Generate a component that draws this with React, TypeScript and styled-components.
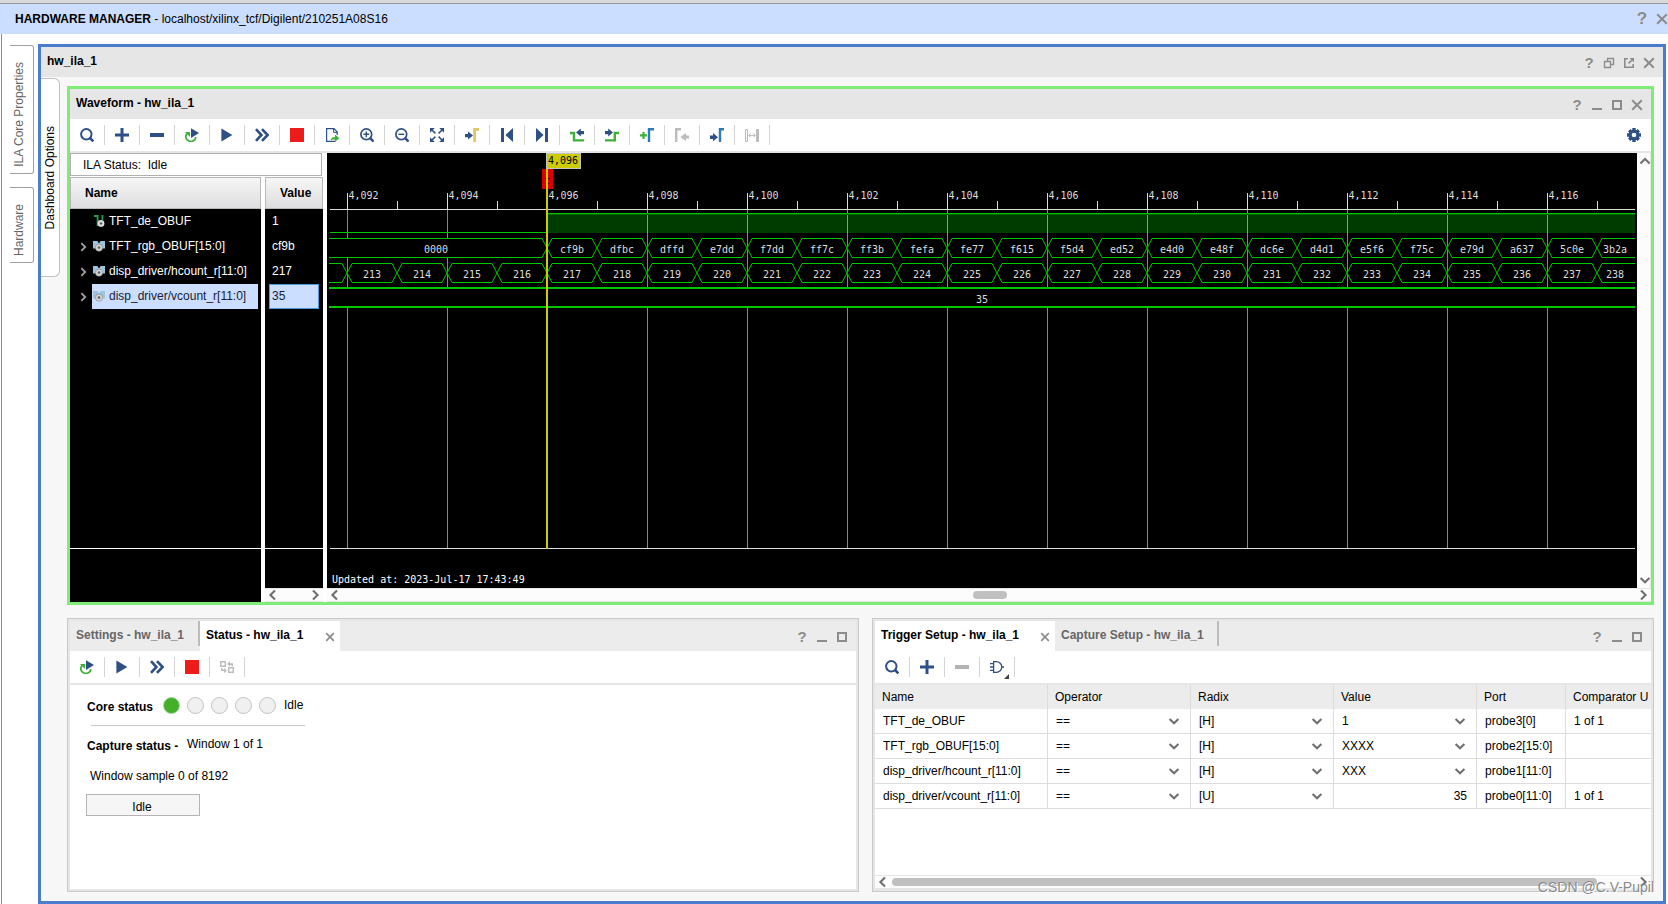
import React from "react";
import styled, { createGlobalStyle } from "styled-components";

const NAVY = "#2f4f87";
const GREEN = "#3fb03a";
const BLUE = "#2b7bb9";
const MUTED = "#bcbcbc";
const TRACE = "#00c800";

const GlobalStyle = createGlobalStyle`
  * { box-sizing: border-box; }
  body {
    margin: 0;
    background: #fff;
    color: #000;
    font: 12px/16px "Liberation Sans", Arial, sans-serif;
  }
  button, input, select { font: inherit; color: inherit; }
  h1, h2, p { margin: 0; font-size: inherit; }
`;

/* ---------- page shell ---------- */

const Page = styled.div`
  min-height: 100vh;
  display: flex;
  flex-direction: column;
  border-top: 3px solid #d9d9d9;
`;

const AppBar = styled.header`
  height: 31px;
  flex: none;
  display: flex;
  align-items: center;
  justify-content: space-between;
  padding: 0 0 0 15px;
  border-top: 1px solid #999;
  background: #cbdeff;
  overflow: hidden;
`;

const AppTitle = styled.h1`
  font-weight: normal;
`;

const AppControls = styled.div`
  display: flex;
  margin-right: -4px;
`;

const Workspace = styled.div`
  flex: 1;
  display: flex;
  margin-left: 1px;
  padding: 10px 2px 0 8px;
  border-left: 1px solid #8c8c8c;
`;

const SideTabs = styled.nav`
  width: 28px;
  flex: none;
  display: flex;
  flex-direction: column;
  gap: 13px;
  padding-top: 1px;
`;

const VerticalTab = styled.button<{ $length: number; $active?: boolean }>`
  width: ${(p) => (p.$active ? 19 : 24)}px;
  height: ${(p) => p.$length}px;
  display: flex;
  align-items: center;
  justify-content: center;
  padding: ${(p) => (p.$active ? "0" : "10px 6px 0 0")};
  border: 1px solid ${(p) => (p.$active ? "#c0c0c0" : "#a0a0a0")};
  border-left: 0;
  border-radius: ${(p) => (p.$active ? "0 6px 6px 0" : "0 3px 3px 0")};
  background: #fff;
  color: ${(p) => (p.$active ? "#000" : "#666")};
`;

const VerticalText = styled.span`
  writing-mode: vertical-rl;
  transform: rotate(180deg);
  white-space: nowrap;
`;

const Dashboard = styled.main`
  flex: 1;
  min-width: 0;
  display: flex;
  flex-direction: column;
  border: 3px solid #4a7dcd;
  background: #f7f7f7;
`;

const DashboardBody = styled.div`
  flex: 1;
  display: flex;
  padding: 1px 9px 9px 0;
`;

const DashboardSide = styled.div`
  width: 26px;
  flex: none;
`;

const Panels = styled.div`
  flex: 1;
  min-width: 0;
  display: flex;
  flex-direction: column;
  gap: 13px;
  padding-top: 8px;
`;

/* ---------- window chrome ---------- */

const TitleBar = styled.div`
  height: 30px;
  display: flex;
  align-items: center;
  justify-content: space-between;
  padding: 0 4px 0 6px;
  background: #e6e6e6;
`;

const PanelTitle = styled.h2`
  padding-bottom: 2px;
`;

const WindowControls = styled.div`
  display: flex;
  padding-top: 2px;
`;

const ControlButton = styled.button`
  width: 20px;
  height: 20px;
  display: flex;
  align-items: center;
  justify-content: center;
  padding: 0;
  border: 0;
  background: none;
  color: #8c8c8c;
`;

const QuestionMark = styled.span<{ $large?: boolean }>`
  font-size: ${(p) => (p.$large ? 17 : 15)}px;
  font-weight: bold;
`;

const Toolbar = styled.div`
  height: 34px;
  flex: none;
  display: flex;
  align-items: center;
  border-bottom: 2px solid #e6e6e6;
  background: #fff;
`;

const ToolButton = styled.button`
  width: 35px;
  height: 20px;
  display: flex;
  align-items: center;
  justify-content: center;
  padding: 0;
  border: 0;
  border-right: 1px solid #d4d4d4;
  background: none;
`;

const SettingsButton = styled(ToolButton)`
  margin-left: auto;
  border-right: 0;
`;

/* ---------- waveform ---------- */

const WaveWindow = styled.section`
  border: 3px solid #80ec78;
  background: #fff;
`;

const WaveBody = styled.div`
  display: flex;
  gap: 4px;
`;

const SignalPane = styled.div`
  width: 253px;
  flex: none;
`;

const IlaStatus = styled.div`
  width: 252px;
  height: 23px;
  display: flex;
  align-items: center;
  margin-bottom: 1px;
  padding-left: 12px;
  border: 1px solid #b0b0b0;
  white-space: pre;
`;

const SignalColumns = styled.div`
  display: flex;
  gap: 4px;
`;

const SignalColumn = styled.div<{ $width: number }>`
  width: ${(p) => p.$width}px;
  height: 425px;
  display: flex;
  flex-direction: column;
  background: #000;
  color: #fff;
`;

const ColumnHeader = styled.div`
  height: 32px;
  flex: none;
  display: flex;
  align-items: center;
  padding-left: 14px;
  border: 1px solid #b8b8b8;
  background: linear-gradient(#f6f6f6, #dedee0);
  color: #000;
  font-weight: bold;
`;

const SignalList = styled.div`
  height: 339px;
`;

const SignalFooter = styled.div`
  flex: 1;
  border-top: 1px solid #fff;
`;

const SignalRow = styled.div`
  height: 25px;
  display: flex;
  align-items: center;
  padding: 0 3px 0 6px;
`;

const Expander = styled.button`
  width: 16px;
  height: 16px;
  display: flex;
  align-items: center;
  justify-content: center;
  padding: 0 3px 0 0;
  border: 0;
  background: none;
  color: #a0a0a0;
`;

const SignalLabel = styled.div<{ $selected?: boolean }>`
  flex: 1;
  height: 25px;
  display: flex;
  align-items: center;
  gap: 3px;
  padding-bottom: 2px;
  background: ${(p) => (p.$selected ? "#cbdeff" : "transparent")};
  color: ${(p) => (p.$selected ? "#1a1a33" : "#fff")};
  white-space: nowrap;
`;

const SignalValue = styled.div<{ $selected?: boolean }>`
  height: 25px;
  display: flex;
  align-items: center;
  margin: 0 4px;
  padding: 0 0 2px 2px;
  border: 1px solid ${(p) => (p.$selected ? "#4a9be0" : "transparent")};
  background: ${(p) => (p.$selected ? "#cbdeff" : "transparent")};
  color: ${(p) => (p.$selected ? "#1a1a33" : "#fff")};
`;

const WavePane = styled.div`
  flex: 1;
  min-width: 0;
`;

const WaveView = styled.div`
  display: flex;
`;

const WaveCanvas = styled.div`
  flex: 1;
  min-width: 0;
  height: 435px;
  padding: 0 2px;
  background: #000;
`;

const Plot = styled.svg`
  display: block;
  width: 100%;
  height: 435px;
  font: 10px "DejaVu Sans Mono", monospace;
  fill: #dcdcdc;
`;

/* ---------- scroll bars ---------- */

const HScroll = styled.div`
  height: 14px;
  flex: none;
  display: flex;
  align-items: center;
  border-top: 1px solid #e6e6e6;
  border-bottom: 1px solid #e6e6e6;
  background: #fcfcfc;
`;

const VScroll = styled.div`
  width: 14px;
  display: flex;
  flex-direction: column;
  justify-content: space-between;
  border-right: 1px solid #e6e6e6;
  background: #fcfcfc;
`;

const ScrollButton = styled.button`
  width: 16px;
  height: 16px;
  flex: none;
  display: flex;
  align-items: center;
  justify-content: center;
  padding: 0;
  border: 0;
  background: none;
  color: #707070;
`;

const ScrollTrack = styled.div<{ $before: number; $after: number }>`
  flex: 1;
  display: grid;
  grid-template-columns: ${(p) => p.$before}fr auto ${(p) => p.$after}fr;
`;

const Thumb = styled.div`
  grid-column: 2;
  width: 34px;
  height: 8px;
  border-radius: 4px;
  background: #c0c0c0;
`;

const LongThumb = styled(Thumb)`
  width: auto;
  flex: 1;
  margin: 0 38px 0 1px;
`;

/* ---------- lower panels ---------- */

const LowerRow = styled.div`
  flex: 1;
  display: grid;
  grid-template-columns: minmax(0, 792fr) minmax(0, 782fr);
  gap: 13px;
`;

const LowerPanel = styled.section`
  min-height: 274px;
  display: flex;
  flex-direction: column;
  border: 1px solid #cacaca;
  outline: 2px solid #e6e6e6;
  outline-offset: -3px;
  padding: 2px;
  background: #fff;
`;

const TabBar = styled.div`
  height: 30px;
  flex: none;
  display: flex;
  background: #ececec;
`;

const Tab = styled.div<{ $active?: boolean; $width: number }>`
  width: ${(p) => p.$width}px;
  height: ${(p) => (p.$active ? 30 : 25)}px;
  display: flex;
  align-items: flex-start;
  justify-content: space-between;
  border-right: ${(p) => (p.$active ? 0 : 2)}px solid #bcbcbc;
  background: ${(p) => (p.$active ? "#fff" : "transparent")};
`;

const TabLabel = styled.button<{ $active?: boolean }>`
  padding: 6px 0 0 6px;
  border: 0;
  background: none;
  color: ${(p) => (p.$active ? "#000" : "#666")};
  font-weight: bold;
  line-height: 16px;
  white-space: nowrap;
`;

const TabClose = styled(ControlButton)`
  margin-top: 6px;
`;

const TabControls = styled.div`
  display: flex;
  margin-left: auto;
  padding: 6px 4px 0 0;
`;

const StatusBody = styled.div`
  flex: 1;
  padding: 12px 16px;
`;

const CoreStatus = styled.div`
  height: 17px;
  display: flex;
  gap: 7px;
  margin-bottom: 11px;
`;

const StatusLabel = styled.strong`
  width: 70px;
  padding: 2px 0 0 1px;
`;

const Lamp = styled.span<{ $on?: boolean }>`
  width: 17px;
  height: 17px;
  border: 1px solid ${(p) => (p.$on ? "#a4d69c" : "#c0c0c0")};
  border-radius: 50%;
  background: ${(p) => (p.$on ? "#43b02a" : "#f0f0f0")};
`;

const LampText = styled.span`
  padding-left: 1px;
`;

const Divider = styled.hr`
  width: 214px;
  margin: 0 0 10px 5px;
  border: 0;
  border-top: 1px solid #c8c8c8;
`;

const CaptureStatus = styled.div`
  display: flex;
  gap: 7px;
  margin-bottom: 14px;
  padding-left: 1px;
`;

const CaptureLabel = styled.strong`
  width: 93px;
  padding-top: 2px;
`;

const SampleText = styled.p`
  padding-left: 4px;
`;

const ProgressBox = styled.div`
  width: 114px;
  height: 22px;
  margin-top: 10px;
  padding: 4px 2px 0 0;
  border: 1px solid #b4b4b4;
  background: #f6f6f6;
  line-height: 16px;
  text-align: center;
`;

const TableArea = styled.div`
  flex: 1;
  overflow: hidden;
`;

const ProbeTable = styled.table`
  width: 100%;
  table-layout: fixed;
  border-collapse: separate;
  border-spacing: 0;
`;

const Col = styled.col<{ $width?: number }>`
  width: ${(p) => (p.$width ? p.$width + "px" : "auto")};
`;

const HeadCell = styled.th`
  height: 24px;
  padding: 0 0 0 7px;
  border-right: 1px solid #dcdcdc;
  background: #ececec;
  font-weight: normal;
  text-align: left;
  white-space: nowrap;
  &:last-child { border-right: 0; }
`;

const Cell = styled.td`
  height: 25px;
  padding: 0 0 0 8px;
  border-right: 1px solid #dedede;
  border-bottom: 1px solid #dedede;
  white-space: nowrap;
  &:last-child { border-right: 0; }
`;

const SelectWrap = styled.span`
  display: grid;
  align-items: center;
`;

const CellSelect = styled.select`
  grid-area: 1 / 1;
  width: 100%;
  height: 20px;
  padding: 0;
  border: 0;
  appearance: none;
  background: none;
`;

const SelectArrow = styled.span`
  grid-area: 1 / 1;
  justify-self: end;
  display: flex;
  padding-right: 9px;
  color: #707070;
  pointer-events: none;
`;

const CellInput = styled.input`
  display: block;
  width: 100%;
  height: 20px;
  padding: 0 9px 0 0;
  border: 0;
  background: none;
  text-align: right;
`;

const Watermark = styled.div`
  position: absolute;
  right: 14px;
  bottom: 8px;
  color: #8a8a8a;
  font-size: 14px;
  line-height: 18px;
  text-shadow: 1px 1px 0 #fff;
`;

const Screen = styled.div`
  position: relative;
`;

/* ---------- icons ---------- */

const glyphs: Record<string, React.ReactNode> = {
  search: (
    <g fill="none" stroke={NAVY} strokeWidth="2">
      <circle cx="6.3" cy="6.3" r="5.2" />
      <path d="M10 10l3.4 3.4" strokeWidth="2.6" />
    </g>
  ),
  plus: <path d="M0 7h14M7 0v14" stroke={NAVY} strokeWidth="3" />,
  minus: <path d="M0 7h14" stroke={NAVY} strokeWidth="4" />,
  minusOff: <path d="M0 7h14" stroke="#b4b4b4" strokeWidth="4" />,
  rerun: (
    <g>
      <path d="M2.2 5.6A5 4.6 0 1 0 10.8 9" fill="none" stroke={GREEN} strokeWidth="1.8" />
      <path d="M0 4h5v5z" fill={GREEN} />
      <path d="M6 .2l8 4.9-8 5z" fill={NAVY} />
    </g>
  ),
  play: <path d="M1.4 .5L12.4 7l-11 6.5z" fill={NAVY} />,
  forward: (
    <path d="M1 1.2L6.4 7 1 12.8M7 1.2L12.6 7 7 12.8" fill="none" stroke={NAVY} strokeWidth="2.6" />
  ),
  stop: <path d="M0 0h14v14H0z" fill="#ee1b1b" />,
  exportFile: (
    <g>
      <path d="M12.2 7V4L9 .6H1.6v12.8h8.8" fill="none" stroke={NAVY} strokeWidth="1.2" />
      <path d="M8.6.6v3.8h3.6" fill="none" stroke={NAVY} />
      <path d="M5.6 12.6c.3-2.6 2-3.6 4.4-3.6V6.6l4.3 3.7-4.3 3.4v-2.2c-2-.1-3.2.1-4.4 1.1z" fill={GREEN} />
    </g>
  ),
  zoomIn: (
    <g fill="none" stroke={NAVY} strokeWidth="1.7">
      <circle cx="6.3" cy="6.3" r="5.4" />
      <path d="M10.2 10.2l3.4 3.4" strokeWidth="2.5" />
      <path d="M3.4 6.3h5.8M6.3 3.4v5.8" strokeWidth="1.4" />
    </g>
  ),
  zoomOut: (
    <g fill="none" stroke={NAVY} strokeWidth="1.7">
      <circle cx="6.3" cy="6.3" r="5.4" />
      <path d="M10.2 10.2l3.4 3.4" strokeWidth="2.5" />
      <path d="M3.4 6.3h5.8" strokeWidth="1.4" />
    </g>
  ),
  fit: (
    <g>
      <path
        d="M0 0h4.8L0 4.8zM14 0H9.2L14 4.8zM0 14h4.8L0 9.2zM14 14H9.2L14 9.2z"
        fill={NAVY}
      />
      <path d="M2 2l3.4 3.4M12 2L8.6 5.4M2 12l3.4-3.4M12 12L8.6 8.6" stroke={NAVY} strokeWidth="1.5" />
    </g>
  ),
  toCursor: (
    <g>
      <path d="M0 6h3V3.4L8 7.6 3 11.4V9.2H0z" fill={NAVY} />
      <path d="M9.6 14V1.4H14" fill="none" stroke="#dfc766" strokeWidth="2.8" />
    </g>
  ),
  first: <path d="M1 0h3v14H1zM13 0v14L5.4 7z" fill={NAVY} />,
  last: <path d="M10 0h3v14h-3zM1 0v14L8.6 7z" fill={NAVY} />,
  prevEdge: (
    <g>
      <path d="M0 5h4v7.4h10" fill="none" stroke={GREEN} strokeWidth="2.4" />
      <path d="M14 3h-3.2V.6L6 4.6l4.8 3.8V6.2H14z" fill={NAVY} />
    </g>
  ),
  nextEdge: (
    <g>
      <path d="M0 12.4h9.8V5H14" fill="none" stroke={GREEN} strokeWidth="2.4" />
      <path d="M0 3h3.2V.6L8 4.6 3.2 8.4V6.2H0z" fill={NAVY} />
    </g>
  ),
  addMarker: (
    <g fill="none">
      <path d="M0 7.4h7M3.5 4v7" stroke={GREEN} strokeWidth="2.2" />
      <path d="M9 14V1.2h5" stroke={BLUE} strokeWidth="2.4" />
    </g>
  ),
  prevMarker: (
    <g>
      <path d="M1.2 14V1.2H6" fill="none" stroke={MUTED} strokeWidth="2.4" />
      <path d="M14 7.4h-3V5L5.4 9l5.6 4v-2.4h3z" fill={MUTED} />
    </g>
  ),
  nextMarker: (
    <g>
      <path d="M0 7.6h3V5l5 4.2-5 4V11H0z" fill={NAVY} />
      <path d="M10 14V1.2h4" fill="none" stroke={BLUE} strokeWidth="2.4" />
    </g>
  ),
  swapMarkers: (
    <g fill="none" stroke={MUTED}>
      <path d="M.5 1.5v12h2v-12z" />
      <path d="M11.5 1.5v12h2v-12z" fill={MUTED} />
      <path d="M4 7.4h6M5.6 5.4L3.6 7.4l2 2M8.4 5.4l2 2-2 2" />
    </g>
  ),
  swapCores: (
    <g>
      <path d="M.7 1.7h4.6v4.6H.7zM8.7 7.7h4.6v4.6H8.7z" fill="none" stroke={MUTED} strokeWidth="1.4" />
      <path d="M13 6.2V3.2H10V1L7 4l3 2.4V5h1.4v1.2zM1 8v3h3v2l3-2.6L4 8v1.4H2.4V8z" fill={MUTED} />
    </g>
  ),
  gate: (
    <g fill="none" stroke={NAVY} strokeWidth="1.3">
      <path d="M3.6 1.6h2.8a5.2 5.2 0 0 1 0 10.8H3.6z" />
      <path d="M0 3.6h3.6M0 7h3.6M0 10.4h3.6M11.4 7H14" />
    </g>
  ),
  gear: (
    <g>
      <g stroke={NAVY} strokeWidth="3.4">
        <path d="M7 0v14M0 7h14M2.2 2.2l9.6 9.6M11.8 2.2l-9.6 9.6" />
      </g>
      <circle cx="7" cy="7" r="5.2" fill={NAVY} />
      <circle cx="7" cy="7" r="2.3" fill="#fff" />
    </g>
  ),
  minimize: <path d="M2 11h10" stroke="currentColor" strokeWidth="2" />,
  maximize: <path d="M3 3h8v8H3z" fill="none" stroke="currentColor" strokeWidth="2" />,
  restore: (
    <path
      d="M2.5 5.5h6v6h-6zM5.5 5V2.5h6v6H9"
      fill="none"
      stroke="currentColor"
      strokeWidth="1.3"
    />
  ),
  popOut: (
    <g fill="none" stroke="currentColor" strokeWidth="1.6">
      <path d="M6 2.8H2.8v8.4h8.4V8" />
      <path d="M6.6 7.4l3.6-3.6" />
      <path d="M7.6 2H12v4.4z" fill="currentColor" stroke="none" />
    </g>
  ),
  close: <path d="M2.2 2.2l9.6 9.6M11.8 2.2l-9.6 9.6" stroke="currentColor" strokeWidth="2" />,
  closeTab: <path d="M3.2 3.2l7.6 7.6M10.8 3.2l-7.6 7.6" stroke="currentColor" strokeWidth="1.7" />,
  left: <path d="M9 2.4L4.4 7 9 11.6" fill="none" stroke="currentColor" strokeWidth="2.1" />,
  right: <path d="M5 2.4L9.6 7 5 11.6" fill="none" stroke="currentColor" strokeWidth="2.1" />,
  up: <path d="M2.4 9.4L7 5l4.6 4.4" fill="none" stroke="currentColor" strokeWidth="2.1" />,
  down: <path d="M2.6 5L7 9.2 11.4 5" fill="none" stroke="currentColor" strokeWidth="2.1" />,
  scalar: (
    <g>
      <path d="M2 2h3.6v10M10.4 1v5" fill="none" stroke="#2f9a45" strokeWidth="1.8" />
      <circle cx="9" cy="9.4" r="3.4" fill="#dcdcdc" />
      <circle cx="9" cy="9.4" r="1.2" fill="#555" />
    </g>
  ),
  bus: (
    <g>
      <path d="M1 2h4.4l1.6 2.4L8.6 2H13v7.4H9L7 8 4.4 9.4H1z" fill="#9cc4dc" />
      <circle cx="7" cy="8.6" r="3.6" fill="#d8d8d8" stroke="#888" strokeWidth=".7" />
      <circle cx="7" cy="8.6" r="1.4" fill="#666" />
    </g>
  ),
};

const Icon = ({ name, size = 14 }: { name: string; size?: number }) => (
  <svg width={size} height={size} viewBox="0 0 14 14" aria-hidden="true">
    {glyphs[name]}
  </svg>
);

const MenuCorner = styled.svg`
  align-self: flex-end;
  margin: 0 -5px -2px 0;
`;

/* ---------- data ---------- */

const waveTools: [string, string][] = [
  ["search", "Search"],
  ["plus", "Add probes"],
  ["minus", "Remove"],
  ["rerun", "Auto re-trigger"],
  ["play", "Run trigger"],
  ["forward", "Run trigger immediate"],
  ["stop", "Stop trigger"],
  ["exportFile", "Export ILA data"],
  ["zoomIn", "Zoom in"],
  ["zoomOut", "Zoom out"],
  ["fit", "Zoom fit"],
  ["toCursor", "Go to cursor"],
  ["first", "Go to start"],
  ["last", "Go to end"],
  ["prevEdge", "Previous transition"],
  ["nextEdge", "Next transition"],
  ["addMarker", "Add marker"],
  ["prevMarker", "Previous marker"],
  ["nextMarker", "Next marker"],
  ["swapMarkers", "Swap cursors"],
];

const statusTools: [string, string][] = [
  ["rerun", "Auto re-trigger"],
  ["play", "Run trigger"],
  ["forward", "Run trigger immediate"],
  ["stop", "Stop trigger"],
  ["swapCores", "Toggle cores"],
];

const signals = [
  { name: "TFT_de_OBUF", value: "1", bus: false },
  { name: "TFT_rgb_OBUF[15:0]", value: "cf9b", bus: true },
  { name: "disp_driver/hcount_r[11:0]", value: "217", bus: true },
  { name: "disp_driver/vcount_r[11:0]", value: "35", bus: true, selected: true },
];

const rgbValues = [
  "cf9b", "dfbc", "dffd", "e7dd", "f7dd", "ff7c", "ff3b", "fefa", "fe77", "f615", "f5d4",
  "ed52", "e4d0", "e48f", "dc6e", "d4d1", "e5f6", "f75c", "e79d", "a637", "5c0e", "3b2a",
];

const probes = [
  { name: "TFT_de_OBUF", radix: "[H]", value: "1", port: "probe3[0]", usage: "1 of 1" },
  { name: "TFT_rgb_OBUF[15:0]", radix: "[H]", value: "XXXX", port: "probe2[15:0]", usage: "" },
  { name: "disp_driver/hcount_r[11:0]", radix: "[H]", value: "XXX", port: "probe1[11:0]", usage: "" },
  { name: "disp_driver/vcount_r[11:0]", radix: "[U]", value: "35", port: "probe0[11:0]", usage: "1 of 1" },
];

/* ---------- waveform plot ---------- */

const STEP = 50;
const FIRST = 18;
const CURSOR = FIRST + 4 * STEP;

const BusCell = ({ x, width, y, label, labelX }: {
  x: number; width: number; y: number; label: string; labelX?: number;
}) => (
  <g>
    <path
      d={`M${x} ${y + 10}L${x + 5} ${y + 0.5}H${x + width - 5}L${x + width} ${y + 10}L${x + width - 5} ${y + 19.5}H${x + 5}Z`}
      fill="#000"
      stroke={TRACE}
    />
    <text x={labelX ?? x + width / 2} y={y + 15} textAnchor="middle">{label}</text>
  </g>
);

const WavePlot = () => {
  const majors = Array.from({ length: 13 }, (_, i) => i);
  const lastX = CURSOR + 21 * STEP;
  return (
    <Plot role="img" aria-label="Captured waveform">
      <rect x={CURSOR} y="61" width="100%" height="19" fill="#003c00" />
      {majors.map((i) => {
        const x = FIRST + i * 2 * STEP + 0.5;
        return (
          <g key={i}>
            <path d={`M${x} 56V395`} stroke="#d8d8d8" strokeOpacity="0.62" />
            <path d={`M${x} 40V56M${x + STEP} 48V56`} stroke="#dcdcdc" />
            <text x={x + 1} y="46">{`4,${String(92 + i * 2).padStart(3, "0")}`}</text>
          </g>
        );
      })}
      <rect x="1" y="56" width="100%" height="1" fill="#dcdcdc" />
      <path d={`M1 79.5H${CURSOR}`} stroke={TRACE} />
      <rect x={CURSOR} y="60" width="100%" height="1" fill={TRACE} />
      <rect x={CURSOR} y="61" width="100%" height="1" fill="#006400" />

      <BusCell x={-60} width={CURSOR + 60} y={85} label="0000" labelX={107} />
      {rgbValues.map((v, i) => (
        <BusCell
          key={v}
          x={CURSOR + i * STEP}
          width={STEP}
          y={85}
          label={v}
          labelX={i === 21 ? lastX + 18 : undefined}
        />
      ))}

      <BusCell x={FIRST - STEP} width={STEP} y={110} label="" />
      {Array.from({ length: 26 }, (_, i) => (
        <BusCell
          key={i}
          x={FIRST + i * STEP}
          width={STEP}
          y={110}
          label={String(213 + i)}
          labelX={i === 25 ? lastX + 18 : undefined}
        />
      ))}

      <rect x="0" y="134" width="100%" height="21" fill="#000" />
      <rect x="0" y="134" width="100%" height="2" fill={TRACE} />
      <rect x="0" y="153" width="100%" height="2" fill={TRACE} />
      <text x="50%" y="150" textAnchor="middle">35</text>

      <rect x="1" y="395" width="100%" height="1" fill="#dcdcdc" />
      <text x="3" y="430" fill="#fff">Updated at: 2023-Jul-17 17:43:49</text>

      <rect x={CURSOR - 5} y="16" width="11" height="20" fill="#d80000" />
      <path d={`M${CURSOR - 2} 25.5h5M${CURSOR - 1} 30.5h3`} stroke="#500000" />
      <rect x={CURSOR - 1} y="0" width="2" height="396" fill="#cccc00" />
      <rect x={CURSOR - 0.5} y="0.5" width="34" height="15" fill="#cccc00" stroke="#c4c4c4" />
      <text x={CURSOR + 1} y="11" fill="#000">4,096</text>
    </Plot>
  );
};

/* ---------- parts ---------- */

const Controls = ({ names }: { names: string[] }) => (
  <WindowControls>
    <ControlButton aria-label="Help"><QuestionMark>?</QuestionMark></ControlButton>
    {names.map((n) => (
      <ControlButton key={n} aria-label={n}><Icon name={n} /></ControlButton>
    ))}
  </WindowControls>
);

const Tools = ({ items }: { items: [string, string][] }) => (
  <>
    {items.map(([icon, label]) => (
      <ToolButton key={icon} aria-label={label}><Icon name={icon} /></ToolButton>
    ))}
  </>
);

const Dropdown = ({ value, label }: { value: string; label: string }) => (
  <SelectWrap>
    <CellSelect aria-label={label} defaultValue={value}>
      <option>{value}</option>
    </CellSelect>
    <SelectArrow><Icon name="down" /></SelectArrow>
  </SelectWrap>
);

const LowerControls = () => (
  <TabControls>
    <ControlButton aria-label="Help"><QuestionMark>?</QuestionMark></ControlButton>
    <ControlButton aria-label="Minimize"><Icon name="minimize" /></ControlButton>
    <ControlButton aria-label="Maximize"><Icon name="maximize" /></ControlButton>
  </TabControls>
);

const Waveform = () => (
  <WaveWindow>
    <TitleBar>
      <PanelTitle>Waveform - hw_ila_1</PanelTitle>
      <Controls names={["minimize", "maximize", "close"]} />
    </TitleBar>
    <Toolbar>
      <Tools items={waveTools} />
      <SettingsButton aria-label="Settings"><Icon name="gear" /></SettingsButton>
    </Toolbar>
    <WaveBody>
      <SignalPane>
        <IlaStatus>{"ILA Status:  Idle"}</IlaStatus>
        <SignalColumns>
          <SignalColumn $width={191}>
            <ColumnHeader>Name</ColumnHeader>
            <SignalList>
              {signals.map((s) => (
                <SignalRow key={s.name}>
                  <Expander aria-label={"Expand " + s.name} disabled={!s.bus}>
                    {s.bus && <Icon name="right" size={12} />}
                  </Expander>
                  <SignalLabel $selected={s.selected}>
                    <Icon name={s.bus ? "bus" : "scalar"} />
                    {s.name}
                  </SignalLabel>
                </SignalRow>
              ))}
            </SignalList>
            <SignalFooter />
          </SignalColumn>
          <SignalColumn $width={58}>
            <ColumnHeader>Value</ColumnHeader>
            <SignalList>
              {signals.map((s) => (
                <SignalValue key={s.name} $selected={s.selected}>{s.value}</SignalValue>
              ))}
            </SignalList>
            <SignalFooter />
            <HScroll>
              <ScrollButton aria-label="Scroll left"><Icon name="left" /></ScrollButton>
              <ScrollTrack $before={1} $after={1} />
              <ScrollButton aria-label="Scroll right"><Icon name="right" /></ScrollButton>
            </HScroll>
          </SignalColumn>
        </SignalColumns>
      </SignalPane>
      <WavePane>
        <WaveView>
          <WaveCanvas><WavePlot /></WaveCanvas>
          <VScroll>
            <ScrollButton aria-label="Scroll up"><Icon name="up" /></ScrollButton>
            <ScrollButton aria-label="Scroll down"><Icon name="down" /></ScrollButton>
          </VScroll>
        </WaveView>
        <HScroll>
          <ScrollButton aria-label="Scroll left"><Icon name="left" /></ScrollButton>
          <ScrollTrack $before={630} $after={628}><Thumb /></ScrollTrack>
          <ScrollButton aria-label="Scroll right"><Icon name="right" /></ScrollButton>
        </HScroll>
      </WavePane>
    </WaveBody>
  </WaveWindow>
);

const StatusPanel = () => (
  <LowerPanel>
    <TabBar>
      <Tab $width={130}><TabLabel>Settings - hw_ila_1</TabLabel></Tab>
      <Tab $width={140} $active>
        <TabLabel $active>Status - hw_ila_1</TabLabel>
        <TabClose aria-label="Close Status"><Icon name="closeTab" /></TabClose>
      </Tab>
      <LowerControls />
    </TabBar>
    <Toolbar><Tools items={statusTools} /></Toolbar>
    <StatusBody>
      <CoreStatus>
        <StatusLabel>Core status</StatusLabel>
        <Lamp $on />
        <Lamp />
        <Lamp />
        <Lamp />
        <Lamp />
        <LampText>Idle</LampText>
      </CoreStatus>
      <Divider />
      <CaptureStatus>
        <CaptureLabel>Capture status -</CaptureLabel>
        <span>Window 1 of 1</span>
      </CaptureStatus>
      <SampleText>Window sample 0 of 8192</SampleText>
      <ProgressBox>Idle</ProgressBox>
    </StatusBody>
  </LowerPanel>
);

const TriggerPanel = () => (
  <LowerPanel>
    <TabBar>
      <Tab $width={180} $active>
        <TabLabel $active>Trigger Setup - hw_ila_1</TabLabel>
        <TabClose aria-label="Close Trigger Setup"><Icon name="closeTab" /></TabClose>
      </Tab>
      <Tab $width={164}><TabLabel>Capture Setup - hw_ila_1</TabLabel></Tab>
      <LowerControls />
    </TabBar>
    <Toolbar>
      <Tools items={[["search", "Search"], ["plus", "Add probe"], ["minusOff", "Remove probe"]]} />
      <ToolButton aria-label="Trigger condition">
        <Icon name="gate" />
        <MenuCorner width="5" height="5" viewBox="0 0 5 5"><path d="M5 0v5H0z" fill="#404040" /></MenuCorner>
      </ToolButton>
    </Toolbar>
    <TableArea>
      <ProbeTable>
        <colgroup>
          <Col $width={173} />
          <Col $width={143} />
          <Col $width={143} />
          <Col $width={143} />
          <Col $width={89} />
          <Col />
        </colgroup>
        <thead>
          <tr>
            {["Name", "Operator", "Radix", "Value", "Port", "Comparator U"].map((h) => (
              <HeadCell key={h} scope="col">{h}</HeadCell>
            ))}
          </tr>
        </thead>
        <tbody>
          {probes.map((p) => (
            <tr key={p.name}>
              <Cell>{p.name}</Cell>
              <Cell><Dropdown value="==" label={p.name + " operator"} /></Cell>
              <Cell><Dropdown value={p.radix} label={p.name + " radix"} /></Cell>
              <Cell>
                {p.radix === "[U]"
                  ? <CellInput aria-label={p.name + " value"} defaultValue={p.value} />
                  : <Dropdown value={p.value} label={p.name + " value"} />}
              </Cell>
              <Cell>{p.port}</Cell>
              <Cell>{p.usage}</Cell>
            </tr>
          ))}
        </tbody>
      </ProbeTable>
    </TableArea>
    <HScroll>
      <ScrollButton aria-label="Scroll left"><Icon name="left" /></ScrollButton>
      <LongThumb />
      <ScrollButton aria-label="Scroll right"><Icon name="right" /></ScrollButton>
    </HScroll>
  </LowerPanel>
);

export default function App() {
  return (
    <Screen>
      <GlobalStyle />
      <Page>
        <AppBar>
          <AppTitle><strong>HARDWARE MANAGER</strong> - localhost/xilinx_tcf/Digilent/210251A08S16</AppTitle>
          <AppControls>
            <ControlButton aria-label="Help"><QuestionMark $large>?</QuestionMark></ControlButton>
            <ControlButton aria-label="Close"><Icon name="close" /></ControlButton>
          </AppControls>
        </AppBar>
        <Workspace>
          <SideTabs>
            <VerticalTab $length={129}><VerticalText>ILA Core Properties</VerticalText></VerticalTab>
            <VerticalTab $length={76}><VerticalText>Hardware</VerticalText></VerticalTab>
          </SideTabs>
          <Dashboard>
            <TitleBar>
              <PanelTitle>hw_ila_1</PanelTitle>
              <Controls names={["restore", "popOut", "close"]} />
            </TitleBar>
            <DashboardBody>
              <DashboardSide>
                <VerticalTab $length={199} $active><VerticalText>Dashboard Options</VerticalText></VerticalTab>
              </DashboardSide>
              <Panels>
                <Waveform />
                <LowerRow>
                  <StatusPanel />
                  <TriggerPanel />
                </LowerRow>
              </Panels>
            </DashboardBody>
          </Dashboard>
        </Workspace>
      </Page>
      <Watermark>CSDN @C.V-Pupil</Watermark>
    </Screen>
  );
}
